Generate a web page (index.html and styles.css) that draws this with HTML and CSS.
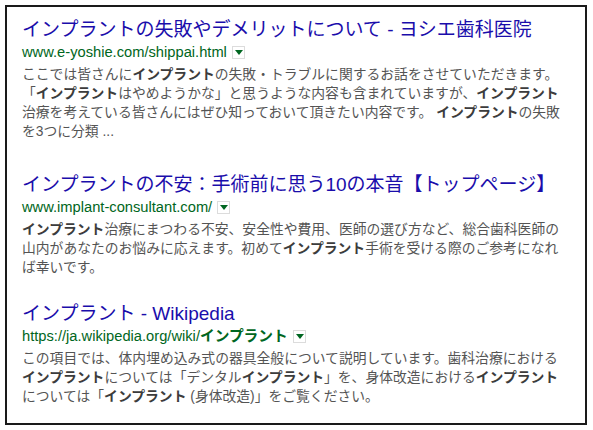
FILE: index.html
```html
<!DOCTYPE html>
<html lang="ja">
<head>
<meta charset="utf-8">
<link rel="stylesheet" href="styles.css">
</head>
<body>
<div class="frame">
  <div class="result">
    <a class="title" href="#">インプラントの失敗やデメリットについて - ヨシエ歯科医院</a>
    <div class="url"><span>www.e-yoshie.com/shippai.html</span><span class="drop"></span></div>
    <div class="snippet">ここでは皆さんに<b>インプラント</b>の失敗・トラブルに関するお話をさせていただきます。<br>「<b>インプラント</b>はやめようかな」と思うような内容も含まれていますが、<b>インプラント</b><br>治療を考えている皆さんにはぜひ知っておいて頂きたい内容です。 <b>インプラント</b>の失敗<br>を3つに分類 ...</div>
  </div>
  <div class="result result-short">
    <a class="title" href="#">インプラントの不安：手術前に思う10の本音【トップページ】</a>
    <div class="url"><span>www.implant-consultant.com/</span><span class="drop"></span></div>
    <div class="snippet"><b>インプラント</b>治療にまつわる不安、安全性や費用、医師の選び方など、総合歯科医師の<br>山内があなたのお悩みに応えます。初めて<b>インプラント</b>手術を受ける際のご参考になれ<br>ば幸いです。</div>
  </div>
  <div class="result">
    <a class="title" href="#">インプラント - Wikipedia</a>
    <div class="url"><span>https://ja.wikipedia.org/wiki/<b>インプラント</b></span><span class="drop"></span></div>
    <div class="snippet">この項目では、体内埋め込み式の器具全般について説明しています。歯科治療における<br><b>インプラント</b>については「デンタル<b>インプラント</b>」を、身体改造における<b>インプラント</b><br>については「<b>インプラント</b> (身体改造)」をご覧ください。</div>
  </div>
</div>
</body>
</html>
```
FILE: styles.css
```css
* { box-sizing: border-box; }
html, body { margin: 0; padding: 0; background: #fff; }
body {
  font-family: "Liberation Sans", "Noto Sans CJK JP", sans-serif;
  padding: 5px;
}
.frame {
  width: 582px;
  height: 420px;
  border: 2px solid #1a1a1a;
  padding: 11px 15px 0 15px;
}
.result { margin-bottom: 32px; }
.result-short { margin-bottom: 25px; }
.result:last-child { margin-bottom: 0; }
.title {
  display: block;
  font-size: 19px;
  line-height: 24px;
  color: #1a0dab;
  text-decoration: none;
  white-space: nowrap;
}
.url {
  display: flex;
  align-items: center;
  font-size: 14.7px;
  line-height: 20px;
  color: #006621;
  margin-top: 0;
}
.url b { font-weight: bold; }
.drop {
  display: inline-block;
  position: relative;
  width: 13px;
  height: 13px;
  margin-left: 5px;
  border: 1px solid #dcdcdc;
  background: #fff;
}
.drop::after {
  content: "";
  position: absolute;
  left: 2px;
  top: 3px;
  border-left: 4px solid transparent;
  border-right: 4px solid transparent;
  border-top: 5px solid #006621;
}
.snippet {
  margin-top: 3px;
  font-size: 13.8px;
  line-height: 19px;
  color: #545454;
  white-space: nowrap;
}
.snippet b { color: #3c3c3c; font-weight: bold; }
```
